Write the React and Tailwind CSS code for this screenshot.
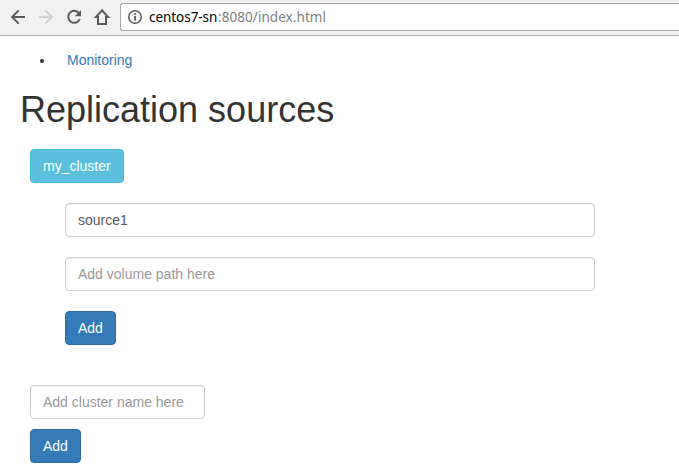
function NavIcon({ label, color = "#5a5a5a", children }) {
  return (
    <button type="button" aria-label={label} className="flex h-[34px] w-7 items-center justify-center">
      <svg width="20" height="20" viewBox="0 0 20 20" fill="none" stroke={color} strokeWidth="2">
        {children}
      </svg>
    </button>
  );
}

function Toolbar() {
  return (
    <header className="flex h-9 items-start border-b border-[#b0b0b0] bg-[#f1f1f1] pl-1">
      <NavIcon label="Back">
        <path d="M17 10H4.4M10.700 3.400L4.100 10l6.600 6.600" />
      </NavIcon>
      <NavIcon label="Forward" color="#d0d0d0">
        <path d="M3 10h12.600M9.300 3.400L15.900 10l-6.600 6.600" />
      </NavIcon>
      <NavIcon label="Reload">
        <path d="M14.600 5.700A6 6 0 1 0 15.800 12" />
        <path d="M17 3v6.200h-6.200z" fill="#5a5a5a" stroke="none" />
      </NavIcon>
      <NavIcon label="Home">
        <path d="M10 3.300L3.900 10H6V17H14V10H16.100Z" />
      </NavIcon>
      <div className="ml-1 mt-[3px] flex h-7 flex-1 items-center rounded-l-[3px] border border-r-0 border-[#a6a6a6] bg-white pl-[7px]">
        <svg width="14" height="14" viewBox="0 0 14 14" fill="none" stroke="#5a5a5a">
          <circle cx="7" cy="7" r="6.250" strokeWidth="1.500" />
          <path d="M7 6v4.500M7 3.300v1.700" strokeWidth="1.800" />
        </svg>
        <div className="ml-[7px] flex whitespace-nowrap font-['Noto_Sans',sans-serif] text-[13.5px] leading-[20px]">
          <span className="w-[69px] tracking-[-0.05px] text-black">centos7-sn</span>
          <span className="tracking-[0.06px] text-[#808080]">:8080/index.html</span>
        </div>
      </div>
    </header>
  );
}

const fieldClass =
  "block h-[34px] rounded border border-[#ccc] bg-white px-3 py-1.5 text-sm text-[#555] shadow-[inset_0_1px_1px_rgba(0,0,0,0.075)] outline-none placeholder:text-[#999]";
const buttonClass = "block h-[34px] rounded border px-3 text-sm text-white";

export default function App() {
  return (
    <div className="h-[473px] w-[679px] overflow-hidden bg-white font-['Liberation_Sans',Arial,sans-serif] text-sm leading-5 text-[#333]">
      <Toolbar />
      <ul className="flex h-[50px] items-start pl-10 pt-[14px]">
        <li className="flex items-center">
          <span className="mt-0.5 h-1 w-1 rounded-full bg-[#333]" />
          <a href="#monitoring" className="ml-[23px] text-[#337ab7]">Monitoring</a>
        </li>
      </ul>
      <main className="flex flex-col items-start pl-5">
        <h1 className="mt-1 text-[36px] font-medium leading-[40px]">Replication sources</h1>
        <div className="ml-2.5 mt-[19px] flex flex-col items-start">
          <button type="button" className={`${buttonClass} border-[#46b8da] bg-[#5bc0de]`}>my_cluster</button>
          <div className="ml-[35px] mt-5 flex flex-col items-start gap-5">
            <input className={`${fieldClass} w-[530px]`} defaultValue="source1" />
            <input className={`${fieldClass} w-[530px]`} placeholder="Add volume path here" />
            <button type="button" className={`${buttonClass} border-[#2e6da4] bg-[#337ab7]`}>Add</button>
          </div>
          <input className={`${fieldClass} mt-10 w-[175px]`} placeholder="Add cluster name here" />
          <button type="button" className={`${buttonClass} mt-2.5 border-[#2e6da4] bg-[#337ab7]`}>Add</button>
        </div>
      </main>
    </div>
  );
}
